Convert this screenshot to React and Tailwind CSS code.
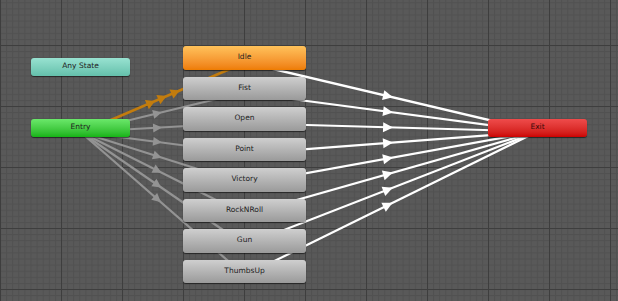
import React from "react";

const STEP = 30.5;
const TOP = 46;
const H = 23.5;
const NODE_CX = 244.5;
const ENTRY = { x: 80.5, y: 128 };
const EXIT = { x: 537.5, y: 128 };

const grayNodes = ["Fist", "Open", "Point", "Victory", "RockNRoll", "Gun", "ThumbsUp"];

// vertical centre of a node in the middle column (0 = Idle)
const centerY = (i) => TOP + STEP * i + H / 2;

function Arrow({ x1, y1, x2, y2, t = 0.5, color, len = 9, wid = 9 }) {
    const dx = x2 - x1;
    const dy = y2 - y1;
    const d = Math.hypot(dx, dy);
    const ux = dx / d;
    const uy = dy / d;
    const px = x1 + dx * t;
    const py = y1 + dy * t;
    const tip = [px + ux * len / 2, py + uy * len / 2];
    const b1 = [px - ux * len / 2 - uy * wid / 2, py - uy * len / 2 + ux * wid / 2];
    const b2 = [px - ux * len / 2 + uy * wid / 2, py - uy * len / 2 - ux * wid / 2];
    return <polygon points={`${tip.join(",")} ${b1.join(",")} ${b2.join(",")}`} fill={color} />;
}

function Edge({ x1, y1, x2, y2, color, width = 2, arrows = [0.5], len, wid }) {
    return (
        <g>
            <line x1={x1} y1={y1} x2={x2} y2={y2} stroke={color} strokeWidth={width} />
            {arrows.map((t) => (
                <Arrow key={t} x1={x1} y1={y1} x2={x2} y2={y2} t={t} color={color} len={len} wid={wid} />
            ))}
        </g>
    );
}

function Canvas() {
    return (
        <svg className="absolute inset-0" width="618" height="301" viewBox="0 0 618 301">
            <defs>
                <pattern id="fine" width="6.1" height="6.1" patternUnits="userSpaceOnUse" x="0" y="45">
                    <path d="M0 0.5 H6.1 M0.5 0 V6.1" stroke="#515151" strokeWidth="1" fill="none" />
                </pattern>
                <pattern id="major" width="61" height="61" patternUnits="userSpaceOnUse" x="0" y="45">
                    <path d="M0 0.5 H61 M0.5 0 V61" stroke="#3e3e3e" strokeWidth="1" fill="none" />
                </pattern>
            </defs>
            <rect width="618" height="301" fill="#595959" />
            <rect width="618" height="301" fill="url(#fine)" />
            <rect width="618" height="301" fill="url(#major)" />

            {/* entry -> states */}
            {grayNodes.map((n, i) => (
                <Edge
                    key={n}
                    x1={ENTRY.x}
                    y1={ENTRY.y + 4}
                    x2={NODE_CX}
                    y2={centerY(i + 1) + 4}
                    color="#939393"
                    width={2.2}
                    arrows={[0.47]}
                    len={9}
                    wid={9}
                />
            ))}

            {/* default transition */}
            <Edge
                x1={ENTRY.x}
                y1={ENTRY.y + 5}
                x2={NODE_CX}
                y2={centerY(0) + 5}
                color="#c27c0e"
                width={2.5}
                arrows={[0.43, 0.5, 0.58]}
                len={9}
                wid={10}
            />

            {/* states -> exit */}
            {["Idle", ...grayNodes].map((n, i) => (
                <Edge
                    key={n}
                    x1={NODE_CX}
                    y1={centerY(i) + 4.5}
                    x2={EXIT.x}
                    y2={EXIT.y + 3.5}
                    color="#ffffff"
                    width={2.2}
                    arrows={[0.49]}
                    len={10}
                    wid={10}
                />
            ))}
        </svg>
    );
}

const label = "text-[7.5px] leading-none text-[#222222]";
const nodeBase =
    "flex items-center justify-center rounded-[3px] shadow-[0_1px_1px_rgba(0,0,0,0.55)] pb-[2px]";

export default function App() {
    return (
        <div
            className="relative h-[301px] w-[618px] overflow-hidden bg-[#595959]"
            style={{ fontFamily: '"DejaVu Sans", "Liberation Sans", sans-serif' }}
        >
            <Canvas />

            {/* left column: any state & entry */}
            <div className={`absolute left-[31px] top-[58px] h-[18px] w-[99px] bg-linear-to-b from-[#98e2d1] to-[#64c0ab] ${nodeBase}`}>
                <span className={label}>Any State</span>
            </div>
            <div className={`absolute left-[31px] top-[119px] h-[18px] w-[99px] bg-linear-to-b from-[#6ae86a] to-[#14b414] ${nodeBase}`}>
                <span className={label}>Entry</span>
            </div>

            {/* states column */}
            <div className="absolute left-[183px] top-[46px] flex w-[123px] flex-col gap-[7px]">
                <div className={`h-[23.5px] bg-linear-to-b from-[#ffc25a] to-[#ee7c00] ${nodeBase}`}>
                    <span className={label}>Idle</span>
                </div>
                {grayNodes.map((n) => (
                    <div key={n} className={`h-[23.5px] bg-linear-to-b from-[#cfcfcf] to-[#9a9a9a] ${nodeBase}`}>
                        <span className={label}>{n}</span>
                    </div>
                ))}
            </div>

            {/* exit */}
            <div className={`absolute left-[488px] top-[119px] h-[18px] w-[99px] bg-linear-to-b from-[#ef4b4b] to-[#cc0000] ${nodeBase}`}>
                <span className="text-[7.5px] leading-none text-[#3a0a0a]">Exit</span>
            </div>
        </div>
    );
}
